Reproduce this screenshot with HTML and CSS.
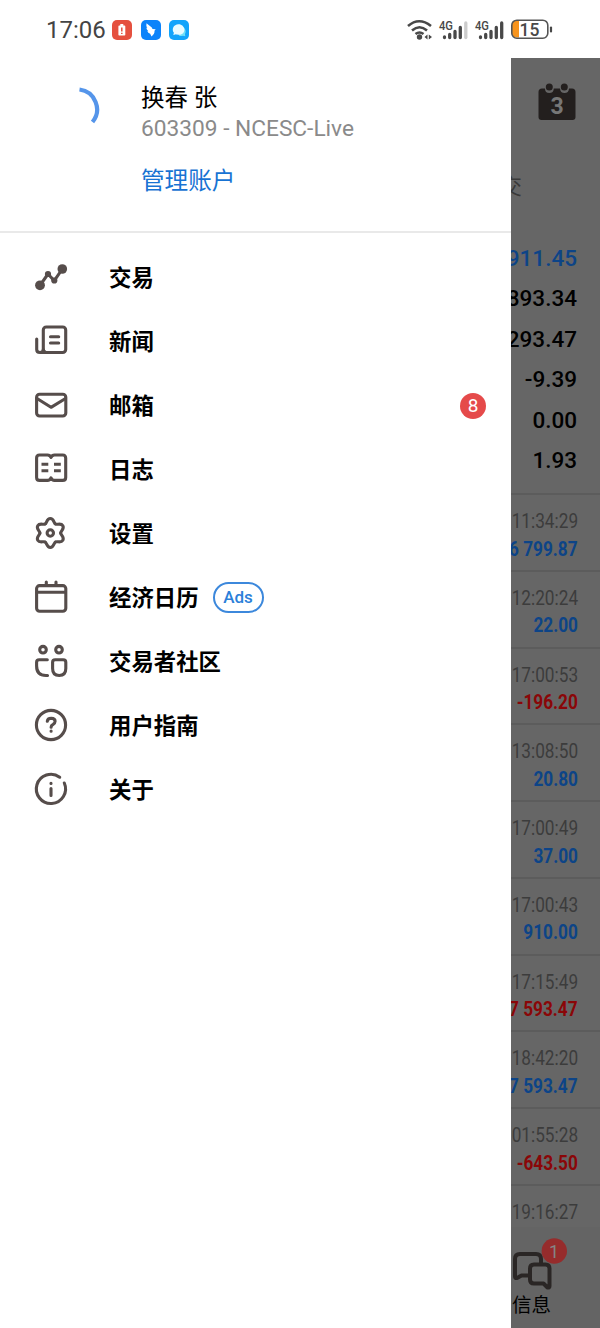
FILE: index.html
```html
<!DOCTYPE html>
<html lang="zh-CN">
<head>
<meta charset="utf-8">
<title>菜单</title>
<link rel="stylesheet" href="styles.css">
</head>
<body>
<header class="status">
  <span class="clock">17:06</span>
  <svg class="app" viewBox="0 0 20 20"><rect width="20" height="20" rx="5" fill="#e5503f"/><path d="M8.300 4h3v1.600h1.200q.8 0 .8.8v8.400q0 .8-.8.8H7.200q-.8 0-.8-.8V6.400q0-.8.8-.8h1.100z" fill="#fff"/><path d="M9.800 7.500v4M9.800 12.800v1.200" stroke="#e5503f" stroke-width="1.500"/></svg>
  <svg class="app" viewBox="0 0 20 20"><rect width="20" height="20" rx="5" fill="#0c83fa"/><path d="M5.500 3.300 10.800 7.500 11.500 9l3.200.2-1.200 1.600q.4 3-3 5.600l-1.300-2.600q-2.300-.7-2.900-2.800l1 .2Q5.300 9.500 5.300 7.600l1 .4Q4.800 6 5.500 3.300z" fill="#fff"/></svg>
  <svg class="app" viewBox="0 0 20 20"><rect width="20" height="20" rx="5" fill="#12a4fb"/><path d="M12 6.500a5 5 0 0 1 4 7.500l.3 2.300-2.400-.5a5 5 0 0 1-4-.3z" fill="#6fe0f8"/><path d="M9.500 4.200c7 0 8.500 10.300.5 10.600-1.500 0-2.300-.2-3-.5l-2.700.7.600-2.300C2.300 9.500 4.500 4.200 9.500 4.200z" fill="#e8fbff"/></svg>
  <svg class="signals" viewBox="0 0 150 26">
    <g fill="none" stroke="#484848" stroke-width="2.600">
      <path d="M1 9q11-9.500 23 0M5 13.500q7.500-6.500 15 0M8.500 17q4-3 8 0"/>
    </g>
    <circle cx="12.500" cy="20" r="2.700" fill="#484848"/>
    <path d="M20.500 17.500v5L17.500 20zM21.800 17.500v5L25 20z" fill="#484848"/>
    <g stroke="#484848" stroke-width="3.300" stroke-linecap="round">
      <path d="M37.500 20v.5M42.700 17.500v3M48 14.500v6M53.300 10.500v10"/>
      <path d="M58.800 6v14.500" stroke="#ccc"/>
      <path d="M73.500 20v.5M78.700 17.500v3M84 14.500v6M89.300 10.500v10M94.700 6v14.500"/>
    </g>
    <text class="gen" x="32" y="12.500" textLength="14" lengthAdjust="spacingAndGlyphs">4G</text>
    <text class="gen" x="68" y="12.500" textLength="14" lengthAdjust="spacingAndGlyphs">4G</text>
    <path d="M112 3.500h-3q-4 0-4 4v9q0 4 4 4h3z" fill="#f7941d"/>
    <rect x="104.800" y="3.200" width="36" height="18" rx="5" fill="none" stroke="#555" stroke-width="1.600"/>
    <path d="M144 10.500v4" stroke="#484848" stroke-width="2.200" stroke-linecap="round"/>
    <text class="charge" x="112.500" y="18.500">15</text>
  </svg>
</header>
<main class="screen">
  <aside class="drawer">
    <section class="account">
      <svg class="spinner" viewBox="0 0 40 44"><path d="M19.500 2.500A20 20 0 0 1 32.500 35" fill="none" stroke="#5595ea" stroke-width="4.200"/></svg>
      <div class="who">
        <div class="name">换春 张</div>
        <div class="login">603309 - NCESC-Live</div>
        <div class="manage">管理账户</div>
      </div>
    </section>
    <nav class="menu">
      <div class="item"><svg class="icon" viewBox="0 0 40 40"><path d="M9 27.300 17 16l6.300 6.700L31.300 11"/><g class="solid"><circle cx="9" cy="27.300" r="4.900"/><circle cx="17" cy="16" r="3.100"/><circle cx="23.300" cy="22.500" r="3.100"/><circle cx="31.300" cy="11" r="4.800"/></g></svg><span>交易</span></div>
      <div class="item"><svg class="icon" viewBox="0 0 40 40"><rect x="12.300" y="5" width="22.400" height="25.500" rx="3"/><path d="M5.700 17v10.500q0 3 3.300 3 3.300 0 3.300-3M12.300 27.500q0 3 3 3H9M19.500 14.700h8.200M19.500 21h8.200"/></svg><span>新闻</span></div>
      <div class="item"><svg class="icon" viewBox="0 0 40 40"><rect x="5.600" y="8.300" width="29.200" height="21.700" rx="3"/><path d="m6 12.500 14 8.800 14.500-8.800"/></svg><span>邮箱</span><b class="count">8</b></div>
      <div class="item"><svg class="icon" viewBox="0 0 40 40"><path d="M20 7.500Q19 5 16.500 5H8.600q-3 0-3 3v19.400q0 3 3 3h7.900q2.500 0 3.500-2.500 1 2.500 3.500 2.500h8.200q3 0 3-3V8q0-3-3-3h-8.200Q21 5 20 7.500z"/><path class="flat" d="M10.500 14.300h6.800M10.500 20.700h6.800M23 14.300h6.800M23 20.700h6.800"/></svg><span>日志</span></div>
      <div class="item"><svg class="icon" viewBox="0 0 40 40"><g transform="translate(19.300 19)"><circle r="3.200"/><path id="tooth" d="M-5.200-9C-3.400-10-3.600-14.500 0-14.500S3.400-10 5.200-9"/><use href="#tooth" transform="rotate(60)"/><use href="#tooth" transform="rotate(120)"/><use href="#tooth" transform="rotate(180)"/><use href="#tooth" transform="rotate(240)"/><use href="#tooth" transform="rotate(300)"/></g></svg><span>设置</span></div>
      <div class="item"><svg class="icon" viewBox="0 0 40 40"><rect x="5.600" y="7.600" width="29.200" height="25.700" rx="3"/><path d="M6 14.200h28.500M15.300 4v3M25 4v3"/></svg><span>经济日历</span><em class="ads">Ads</em></div>
      <div class="item"><svg class="icon" viewBox="0 0 40 40"><circle cx="12" cy="7.700" r="3.300"/><circle cx="28" cy="7.700" r="3.300"/><path d="M16.300 17.700H8.200q-2.600 0-2.600 2.600V24q0 9.500 9.400 9.500h1.500M24.200 17.700h8q2.600 0 2.600 2.600v6.200q0 7-6.600 7t-6.600-7v-6.200q0-2.600 2.600-2.600z"/></svg><span>交易者社区</span></div>
      <div class="item"><svg class="icon" viewBox="0 0 40 40"><circle cx="20" cy="19" r="14.600"/><path d="M16.300 15.300q.3-3 3.900-3 3.900.1 3.900 3 0 1.800-2 3-2 1-2 3M20.100 25v.2"/></svg><span>用户指南</span></div>
      <div class="item"><svg class="icon" viewBox="0 0 40 40"><path d="M28.700 7.200A14.600 14.600 0 1 0 33.300 13M20 18.500v7M20 13.200v.2"/></svg><span>关于</span></div>
    </nav>
  </aside>
  <section class="behind">
    <svg class="today" viewBox="0 0 38 38"><path d="M4 5.500h3q0 4.500 4.300 4.500T15.800 5.500H22q.3 4.500 4.500 4.500T31 5.500h3q3.500 0 3.500 3.500v25q0 3-3 3h-31q-3 0-3-3V9Q.5 5.500 4 5.500z"/><circle cx="11.300" cy="4" r="3.500"/><circle cx="26.300" cy="4" r="3.500"/><text x="19" y="30.500" text-anchor="middle">3</text></svg>
    <div class="tab">成交</div>
    <div class="totals">
      <div class="blue">911.45</div><div>893.34</div><div>293.47</div><div>-9.39</div><div>0.00</div><div>1.93</div>
    </div>
    <div class="deals">
      <div class="deal"><span>11:34:29</span><b>6 799.87</b></div>
      <div class="deal"><span>12:20:24</span><b>22.00</b></div>
      <div class="deal"><span>17:00:53</span><b class="red">-196.20</b></div>
      <div class="deal"><span>13:08:50</span><b>20.80</b></div>
      <div class="deal"><span>17:00:49</span><b>37.00</b></div>
      <div class="deal"><span>17:00:43</span><b>910.00</b></div>
      <div class="deal"><span>17:15:49</span><b class="red">7 593.47</b></div>
      <div class="deal"><span>18:42:20</span><b>7 593.47</b></div>
      <div class="deal"><span>01:55:28</span><b class="red">-643.50</b></div>
      <div class="deal"><span>19:16:27</span></div>
    </div>
    <footer class="bar">
      <svg class="chat" viewBox="0 0 60 56"><g fill="none" stroke="#2a2625" stroke-width="4" stroke-linejoin="round"><path d="M18 28.500h-6.500l-4.500 2.500q-2 .5-2-1.500V12q0-5 5-5h16q5 0 5 5v5"/><path d="M24 17.500h11.500q4 0 4 4V39q0 2-2 1.500L33.500 36.500H24q-4 0-4-4V21.500q0-4 4-4z"/></g><circle cx="44.300" cy="4" r="12.700" fill="#962c2c"/><text x="44" y="10.500" text-anchor="middle">1</text></svg>
      <span>信息</span>
    </footer>
  </section>
</main>
</body>
</html>
```
FILE: styles.css
```css
* { box-sizing: border-box; }
body {
  margin: 0;
  width: 600px;
  height: 1328px;
  overflow: hidden;
  background: #fff;
  color: #000;
  font-family: Roboto, "Noto Sans CJK SC", sans-serif;
}
.status {
  height: 58px;
  display: flex;
  align-items: center;
  padding: 1px 0 0 46px;
}
.clock {
  width: 66px;
  font: 400 24px/30px Roboto, sans-serif;
  color: #444;
}
.app { width: 20px; height: 20px; margin-right: 8.500px; }
.signals { width: 150px; height: 26px; margin-left: auto; margin-right: 43px; }
.gen { font: 500 13px Roboto, sans-serif; fill: #484848; }
.charge { font: 500 17.500px Roboto, sans-serif; fill: #484848; }
.screen { display: flex; height: 1270px; }
.drawer { width: 511px; flex: none; background: #fff; }
.account {
  display: flex;
  height: 175px;
  border-bottom: 2px solid #e9e9e9;
  padding: 23px 0 0 60px;
}
.spinner { width: 40px; height: 44px; margin-top: 6px; }
.who { padding-left: 41px; }
.name { font-size: 23.500px; line-height: 34px; }
.login { margin-top: -2px; font-size: 22.700px; line-height: 32px; color: #8a8a8a; white-space: nowrap; }
.manage { margin-top: 19px; font-size: 23.600px; line-height: 34px; color: #1873d3; }
.menu { padding-top: 13px; }
.item {
  display: flex;
  align-items: center;
  height: 64px;
  padding: 0 25px 0 31px;
  font-size: 22.400px;
  font-weight: 700;
}
.item span { padding-bottom: 4px; }
.icon {
  width: 40px;
  height: 40px;
  margin-right: 38px;
  fill: none;
  stroke: #564d4b;
  stroke-width: 3.100;
  stroke-linecap: round;
  stroke-linejoin: round;
}
.solid { fill: #564d4b; stroke: none; }
.flat { stroke-linecap: butt; }
.count {
  width: 26px;
  margin-left: auto;
  border-radius: 13px;
  background: #e54a4a;
  color: #fff;
  font-size: 19px;
  font-weight: 400;
  line-height: 26px;
  text-align: center;
}
.ads {
  width: 51px;
  margin: 0 0 2px 14px;
  border: 2px solid #3c88dc;
  border-radius: 16px;
  color: #2b7fd9;
  font-size: 17px;
  font-style: normal;
  font-weight: 500;
  line-height: 27px;
  text-align: center;
}
.behind {
  width: 89px;
  flex: none;
  display: flex;
  flex-direction: column;
  align-items: stretch;
  overflow: hidden;
  background: #666;
}
.today { width: 38px; height: 38px; margin: 25px 0 0 27px; fill: #231f1e; flex: none; }
.today text { font: 700 23px Roboto, sans-serif; fill: #777; }
.tab {
  display: flex;
  flex: none;
  justify-content: flex-end;
  height: 30px;
  margin: 51px 78px 0 0;
  font-size: 22px;
  line-height: 30px;
  color: #3a3a3a;
  white-space: nowrap;
}
.totals {
  height: 291px;
  flex: none;
  padding: 36px 23px 0 0;
  font-size: 22.500px;
  font-weight: 500;
  line-height: 40.400px;
}
.totals div { display: flex; justify-content: flex-end; }
.totals .blue { color: #0d4487; }
.deals { height: 734px; overflow: hidden; flex: none; }
.deal {
  display: flex;
  flex-direction: column;
  align-items: flex-end;
  height: 76.750px;
  padding: 13px 22px 0 0;
  border-top: 2px solid #5c5c5c;
  white-space: nowrap;
}
.deal span, .deal b {
  transform: scaleX(.84);
  transform-origin: right;
  font-size: 20.500px;
  line-height: 27.500px;
}
.deal span { color: #3c3c3c; }
.deal b { color: #0d4487; }
.deal b.red { color: #8a0608; }
.bar {
  flex: 1;
  display: flex;
  flex-direction: column;
  align-items: flex-start;
  background: #646464;
  padding-top: 20px;
}
.chat { width: 60px; height: 56px; margin-left: -1px; overflow: visible; flex: none; }
.chat text { font: 400 18px Roboto, sans-serif; fill: #858585; }
.bar span { margin: -10px 0 0 1px; font-size: 19.500px; line-height: 26px; white-space: nowrap; }
```
